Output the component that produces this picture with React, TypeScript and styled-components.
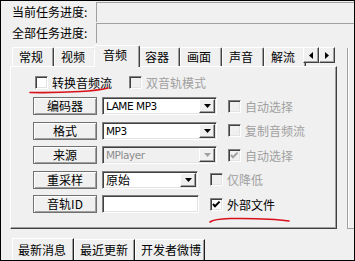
import React from 'react';
import styled, { createGlobalStyle } from 'styled-components';

const Global = createGlobalStyle`
  html, body { margin: 0; padding: 0; background: #f0f0f0; }
  body { font-family: "Noto Sans CJK SC", "DejaVu Sans", sans-serif; font-size: 12px; color: #000; }
  * { box-sizing: border-box; }
`;

const Window = styled.div`
  position: relative;
  width: 355px;
  height: 261px;
  border: 1px solid #000;
  background: #f0f0f0;
  display: flex;
  flex-direction: column;
  overflow: hidden;
`;

const ProgressRow = styled.div`
  display: flex;
  height: 21px;
`;

const ProgressLabel = styled.div`
  width: 95px;
  padding-left: 11px;
  padding-top: 1px;
  line-height: 20px;
  white-space: nowrap;
`;

const ProgressBar = styled.div`
  flex: 1;
  margin-top: 1px;
  border-top: 1px solid #a0a0a0;
  border-left: 1px solid #a0a0a0;
  background: #f0f0f0;
`;

const MainArea = styled.div`
  display: flex;
  height: 185px;
  margin-top: 1px;
`;

const TabWidget = styled.div`
  position: relative;
  margin-left: 9px;
  width: 327px;
  display: flex;
  flex-direction: column;
`;

const TabBar = styled.div`
  display: flex;
  align-items: flex-end;
  height: 22px;
  padding-left: 2px;
`;

const Tab = styled.div<{ $active?: boolean }>`
  position: relative;
  flex: none;
  width: ${p => (p.$active ? 46 : 42)}px;
  height: ${p => (p.$active ? 22 : 19)}px;
  margin: ${p => (p.$active ? '0 -2px -1px -2px' : '0')};
  z-index: ${p => (p.$active ? 2 : 1)};
  padding-left: ${p => (p.$active ? 8 : 6)}px;
  padding-top: 1px;
  line-height: 15px;
  background: #f0f0f0;
  border-top: 1px solid #fff;
  border-left: 1px solid #fff;
  border-right: 1px solid #404040;
  box-shadow: inset -1px 0 #a0a0a0;
  border-top-left-radius: 2px;
  border-top-right-radius: 2px;
  white-space: nowrap;
`;

const TabScroller = styled.div`
  position: absolute;
  left: 293px;
  top: 3px;
  display: flex;
  z-index: 3;
`;

const ScrollBtn = styled.div`
  width: 16px;
  height: 16px;
  background: #f0f0f0;
  border: 1px solid;
  border-color: #fff #404040 #404040 #fff;
  box-shadow: inset -1px -1px #a0a0a0;
  display: flex;
  align-items: center;
  justify-content: center;
`;

const Panel = styled.div`
  position: relative;
  height: 163px;
  border-top: 1px solid #fff;
  border-left: 1px solid #fff;
  border-right: 1px solid #404040;
  border-bottom: 1px solid #404040;
  box-shadow: inset -1px -1px #a0a0a0;
  display: flex;
  flex-direction: column;
`;

const CheckRow = styled.div`
  display: flex;
  align-items: center;
  height: 15px;
  margin-top: 8px;
  padding-left: 24px;
  gap: 17px;
`;

const FormRows = styled.div`
  display: flex;
  flex-direction: column;
  gap: 6.5px;
  margin-top: 7px;
  padding-left: 22px;
`;

const FormRow = styled.div`
  display: flex;
  align-items: center;
  height: 18px;
`;

const Btn = styled.div`
  width: 64px;
  height: 18px;
  background: #f0f0f0;
  border: 1px solid #707070;
  box-shadow: inset 1px 1px #fff, inset -1px -1px #a0a0a0;
  text-align: center;
  line-height: 15px;
  white-space: nowrap;
`;

const Field = styled.div<{ $w: number; $disabled?: boolean }>`
  display: flex;
  align-items: stretch;
  width: ${p => p.$w}px;
  height: 18px;
  margin-left: 5px;
  border: 1px solid;
  border-color: #808080 #fff #fff #808080;
  box-shadow: inset 1px 1px #404040, inset -1px -1px #e3e3e3;
  background: ${p => (p.$disabled ? '#f0f0f0' : '#fff')};
  padding: 1px;
`;

const FieldText = styled.div<{ $disabled?: boolean; $cjk?: boolean }>`
  flex: 1;
  padding-left: 2px;
  font-family: ${p => (p.$cjk ? '"Noto Sans CJK SC", sans-serif' : '"DejaVu Sans", "Noto Sans CJK SC", sans-serif')};
  font-size: ${p => (p.$cjk ? 12 : 10.5)}px;
  letter-spacing: ${p => (p.$cjk ? 0 : -0.45)}px;
  line-height: 14px;
  color: ${p => (p.$disabled ? '#8d8d8d' : '#000')};
  white-space: nowrap;
`;

const DropBtn = styled.div`
  width: 16px;
  background: #f0f0f0;
  border: 1px solid;
  border-color: #fff #404040 #404040 #fff;
  box-shadow: inset -1px -1px #a0a0a0;
  display: flex;
  align-items: center;
  justify-content: center;
`;

const Check = styled.label<{ $disabled?: boolean; $ml?: number }>`
  display: flex;
  align-items: center;
  gap: 4px;
  margin-left: ${p => p.$ml ?? 0}px;
  color: ${p => (p.$disabled ? '#a0a0a0' : '#000')};
  white-space: nowrap;
  line-height: 15px;
`;

const Box = styled.span<{ $disabled?: boolean }>`
  display: flex;
  width: 13px;
  height: 13px;
  border: 1px solid;
  border-color: #808080 #fff #fff #808080;
  box-shadow: inset 1px 1px #404040, inset -1px -1px #e3e3e3;
  background: ${p => (p.$disabled ? '#f0f0f0' : '#fff')};
`;

const SideStub = styled.div`
  flex: 1;
  margin-left: 10px;
  margin-top: 4px;
  border-left: 1px solid #a0a0a0;
  border-bottom: 1px solid #a0a0a0;
  box-shadow: inset 1px 0 #fff;
`;

const BottomTabs = styled.div`
  display: flex;
  align-items: flex-end;
  height: 22px;
  margin-top: 9px;
  padding-left: 11px;
`;

const BottomTab = styled.div<{ $w: number; $active?: boolean }>`
  width: ${p => p.$w}px;
  height: ${p => (p.$active ? 22 : 21)}px;
  padding-left: 5px;
  padding-top: ${p => (p.$active ? 3 : 2)}px;
  line-height: 15px;
  border-top: 1px solid #fff;
  border-left: 1px solid #fff;
  border-right: 1px solid #202020;
  box-shadow: inset -1px 0 #a0a0a0;
  white-space: nowrap;
`;

const Annot = styled.svg`
  position: absolute;
  left: -1px;
  top: -1px;
  pointer-events: none;
  z-index: 10;
`;

const Tri = ({ dir, color = '#000' }: { dir: 'down' | 'left' | 'right'; color?: string }) => {
  if (dir === 'down') return <svg width="7" height="4"><path d="M0 0h7L3.5 4z" fill={color} /></svg>;
  if (dir === 'left') return <svg width="4" height="7"><path d="M4 0v7L0 3.5z" fill={color} /></svg>;
  return <svg width="4" height="7"><path d="M0 0v7L4 3.5z" fill={color} /></svg>;
};

const CheckBox = ({ label, checked, disabled, ml }: { label: string; checked?: boolean; disabled?: boolean; ml?: number }) => (
  <Check $disabled={disabled} $ml={ml}>
    <Box $disabled={disabled}>
      {checked && (
        <svg width="11" height="11" viewBox="0 0 11 11">
          <path d="M2 5 L4 7.2 L8.6 2.6" stroke={disabled ? '#a0a0a0' : '#000'} strokeWidth="2" fill="none" />
        </svg>
      )}
    </Box>
    {label}
  </Check>
);

const Combo = ({ w, value, disabled, cjk }: { w: number; value: string; disabled?: boolean; cjk?: boolean }) => (
  <Field $w={w} $disabled={disabled}>
    <FieldText $disabled={disabled} $cjk={cjk}>{value}</FieldText>
    <DropBtn><Tri dir="down" color={disabled ? '#a0a0a0' : '#000'} /></DropBtn>
  </Field>
);

const tabs = ['常规', '视频', '音频', '容器', '画面', '声音', '解流'];

export default function App() {
  return (
    <>
      <Global />
      <Window>
        <ProgressRow>
          <ProgressLabel>当前任务进度:</ProgressLabel>
          <ProgressBar />
        </ProgressRow>
        <ProgressRow>
          <ProgressLabel>全部任务进度:</ProgressLabel>
          <ProgressBar />
        </ProgressRow>
        <MainArea>
          <TabWidget>
            <TabBar>
              {tabs.map(t => (
                <Tab key={t} $active={t === '音频'}>{t}</Tab>
              ))}
            </TabBar>
            <TabScroller>
              <ScrollBtn><Tri dir="left" /></ScrollBtn>
              <ScrollBtn><Tri dir="right" /></ScrollBtn>
            </TabScroller>
            <Panel>
              <CheckRow>
                <CheckBox label="转换音频流" />
                <CheckBox label="双音轨模式" disabled />
              </CheckRow>
              <FormRows>
                <FormRow>
                  <Btn>编码器</Btn>
                  <Combo w={115} value="LAME MP3" />
                  <CheckBox label="自动选择" disabled ml={11} />
                </FormRow>
                <FormRow>
                  <Btn>格式</Btn>
                  <Combo w={115} value="MP3" />
                  <CheckBox label="复制音频流" disabled ml={11} />
                </FormRow>
                <FormRow>
                  <Btn>来源</Btn>
                  <Combo w={115} value="MPlayer" disabled />
                  <CheckBox label="自动选择" disabled checked ml={11} />
                </FormRow>
                <FormRow>
                  <Btn>重采样</Btn>
                  <Combo w={96} value="原始" cjk />
                  <CheckBox label="仅降低" disabled ml={12} />
                </FormRow>
                <FormRow>
                  <Btn>音轨ID</Btn>
                  <Field $w={97} />
                  <CheckBox label="外部文件" checked ml={11} />
                </FormRow>
              </FormRows>
            </Panel>
          </TabWidget>
          <SideStub />
        </MainArea>
        <BottomTabs>
          <BottomTab $w={62} $active>最新消息</BottomTab>
          <BottomTab $w={61}>最近更新</BottomTab>
          <BottomTab $w={70}>开发者微博</BottomTab>
        </BottomTabs>
        <Annot width="355" height="261" viewBox="0 0 355 261">
          <path d="M30 92.5 Q 55 93 80 91.5 Q 98 90.5 108 88" stroke="#d8101a" strokeWidth="1.6" fill="none" strokeLinecap="round" />
          <path d="M210 222 Q 214 219 230 218.5 Q 270 218 289 221" stroke="#d8101a" strokeWidth="1.6" fill="none" strokeLinecap="round" />
        </Annot>
      </Window>
    </>
  );
}
